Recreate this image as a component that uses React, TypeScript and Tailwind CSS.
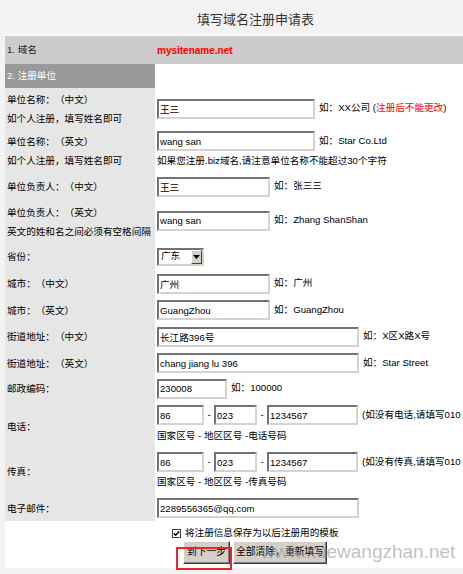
import React from "react";

function Field({ w, value }: { w: string; value: string }) {
  return (
    <input
      readOnly
      defaultValue={value}
      className={`${w} h-[20px] shrink-0 border-2 border-t-[#737373] border-l-[#737373] border-r-[#d6d3ce] border-b-[#d6d3ce] bg-white pl-[1px] text-[9.6px] text-black outline-none`}
    />
  );
}

function Label({ lines }: { lines: string[] }) {
  return (
    <div className="w-[150px] shrink-0 bg-[#e6e6e6] pl-[2px] flex flex-col justify-center leading-[19px] text-black">
      {lines.map((l) => (
        <div key={l} className="whitespace-nowrap">
          {l}
        </div>
      ))}
    </div>
  );
}

function Hint({ children }: { children: React.ReactNode }) {
  return <span className="ml-[4px] whitespace-nowrap">{children}</span>;
}

function Dash() {
  return <span className="w-[10px] shrink-0 text-center">-</span>;
}

function Btn({ w, children }: { w: string; children: React.ReactNode }) {
  return (
    <div
      className={`${w} h-[23px] shrink-0 flex items-center justify-center bg-[#d4d0c8] border border-t-white border-l-white border-r-[#404040] border-b-[#404040] shadow-[inset_-1px_-1px_0_#808080] text-[9.8px] text-black whitespace-nowrap`}
    >
      {children}
    </div>
  );
}

export default function App() {
  return (
    <div className="relative w-[463px] h-[574px] overflow-hidden bg-[#f3f3f3] font-['Liberation_Sans','Noto_Sans_CJK_SC',sans-serif] text-[9.6px] text-black [text-spacing-trim:space-all]">
      <div className="ml-[5px] w-[501px]">
        {/* title */}
        <div className="h-[36px] pt-[5px] flex items-center justify-center border-b border-[#fbfbfb] text-[13px] text-[#333]">
          填写域名注册申请表
        </div>
        {/* row 1 */}
        <div className="h-[28px] flex items-center bg-[#cccccc]">
          <div className="w-[150px] shrink-0 pl-[2px] text-[#222]">1. 域名</div>
          <div className="pl-[2px] text-[10px] font-bold text-[#ff0000]">mysitename.net</div>
        </div>
        {/* row 2 */}
        <div className="h-[24px] flex">
          <div className="w-[150px] shrink-0 bg-[#999999] pl-[2px] flex items-center text-white">2. 注册单位</div>
          <div className="flex-1 bg-white" />
        </div>

        <div className="bg-white">
          <div className="h-[41px] flex">
            <Label lines={["单位名称：（中文）", "如个人注册，填写姓名即可"]} />
            <div className="flex-1 pl-[2px] flex items-center">
              <Field w="w-[158px]" value="王三" />
              <Hint>
                如：XX公司 (<span className="text-[#ff0000]">注册后不能更改</span>)
              </Hint>
            </div>
          </div>

          <div className="h-[43px] flex">
            <Label lines={["单位名称：（英文）", "如个人注册，填写姓名即可"]} />
            <div className="flex-1 pl-[2px] flex flex-col justify-center">
              <div className="flex items-center">
                <Field w="w-[158px]" value="wang san" />
                <Hint>如：Star Co.Ltd</Hint>
              </div>
              <div className="leading-[19px] whitespace-nowrap">如果您注册.biz域名,请注意单位名称不能超过30个字符</div>
            </div>
          </div>

          <div className="h-[29px] flex">
            <Label lines={["单位负责人：（中文）"]} />
            <div className="flex-1 pl-[2px] flex items-center">
              <Field w="w-[113px]" value="王三" />
              <Hint>如：张三三</Hint>
            </div>
          </div>

          <div className="h-[42px] flex">
            <Label lines={["单位负责人：（英文）", "英文的姓和名之间必须有空格间隔"]} />
            <div className="flex-1 pl-[2px] flex items-center pb-[3px]">
              <Field w="w-[113px]" value="wang san" />
              <Hint>如：Zhang ShanShan</Hint>
            </div>
          </div>

          <div className="h-[27px] flex">
            <Label lines={["省份："]} />
            <div className="flex-1 pl-[2px] flex items-center">
              <div className="w-[47px] h-[18px] border-2 border-t-[#737373] border-l-[#737373] border-r-[#d6d3ce] border-b-[#d6d3ce] bg-white flex items-center">
                <span className="flex-1 pl-[2px] whitespace-nowrap">广东</span>
                <span className="w-[11px] h-[14px] bg-[#d4d0c8] border border-t-white border-l-white border-r-[#404040] border-b-[#404040] flex items-center justify-center">
                  <svg width="7" height="4" viewBox="0 0 7 4">
                    <path d="M0 0H7L3.5 4Z" fill="#000" />
                  </svg>
                </span>
              </div>
            </div>
          </div>

          <div className="h-[27px] flex">
            <Label lines={["城市：（中文）"]} />
            <div className="flex-1 pl-[2px] flex items-center">
              <Field w="w-[113px]" value="广州" />
              <Hint>如：广州</Hint>
            </div>
          </div>

          <div className="h-[26px] flex">
            <Label lines={["城市：（英文）"]} />
            <div className="flex-1 pl-[2px] flex items-center">
              <Field w="w-[113px]" value="GuangZhou" />
              <Hint>如：GuangZhou</Hint>
            </div>
          </div>

          <div className="h-[27px] flex">
            <Label lines={["街道地址：（中文）"]} />
            <div className="flex-1 pl-[2px] flex items-center">
              <Field w="w-[202px]" value="长江路396号" />
              <Hint>如：X区X路X号</Hint>
            </div>
          </div>

          <div className="h-[26px] flex">
            <Label lines={["街道地址：（英文）"]} />
            <div className="flex-1 pl-[2px] flex items-center">
              <Field w="w-[202px]" value="chang jiang lu 396" />
              <Hint>如：Star Street</Hint>
            </div>
          </div>

          <div className="h-[25px] flex">
            <Label lines={["邮政编码："]} />
            <div className="flex-1 pl-[2px] flex items-center">
              <Field w="w-[70px]" value="230008" />
              <Hint>如：100000</Hint>
            </div>
          </div>

          <div className="h-[49px] flex">
            <div className="w-[150px] shrink-0 bg-[#e6e6e6] pl-[2px] pt-[3px] flex items-center">电话：</div>
            <div className="flex-1 pl-[2px] pt-[4px] flex flex-col">
              <div className="flex items-center">
                <Field w="w-[47px]" value="86" />
                <Dash />
                <Field w="w-[43px]" value="023" />
                <Dash />
                <Field w="w-[91px]" value="1234567" />
                <Hint>(如没有电话,请填写010</Hint>
              </div>
              <div className="mt-[2px] leading-[18px] whitespace-nowrap">国家区号 - 地区区号 -电话号码</div>
            </div>
          </div>

          <div className="h-[45px] flex">
            <div className="w-[150px] shrink-0 bg-[#e6e6e6] pl-[2px] flex items-center">传真：</div>
            <div className="flex-1 pl-[2px] pt-[2px] flex flex-col">
              <div className="flex items-center">
                <Field w="w-[47px]" value="86" />
                <Dash />
                <Field w="w-[43px]" value="023" />
                <Dash />
                <Field w="w-[91px]" value="1234567" />
                <Hint>(如没有传真,请填写010</Hint>
              </div>
              <div className="mt-[1px] leading-[18px] whitespace-nowrap">国家区号 - 地区区号 -传真号码</div>
            </div>
          </div>

          <div className="h-[26px] flex">
            <Label lines={["电子邮件："]} />
            <div className="flex-1 pl-[2px] flex items-center">
              <Field w="w-[202px]" value="2289556365@qq.com" />
            </div>
          </div>

          {/* bottom */}
          <div className="h-[47px] pt-[5px] flex flex-col">
            <div className="h-[15px] pl-[167px] flex items-center">
              <span className="w-[9px] h-[9px] shrink-0 bg-white border border-[#404040] flex items-center justify-center">
                <svg width="7" height="7" viewBox="0 0 7 7">
                  <path d="M0.8 3.3L2.6 5.2L6.2 1.4" fill="none" stroke="#000" strokeWidth="1.4" />
                </svg>
              </span>
              <span className="ml-[4px] whitespace-nowrap">将注册信息保存为以后注册用的模板</span>
            </div>
            <div className="pl-[178px] flex gap-[3px]">
              <Btn w="w-[47px]">到下一步</Btn>
              <Btn w="w-[94px]">全部清除，重新填写</Btn>
            </div>
          </div>
        </div>
      </div>

      {/* watermark */}
      <div className="absolute left-[261px] top-[542px] text-[19px] leading-[19px] font-['Liberation_Sans',sans-serif] text-[rgba(140,140,140,0.55)] whitespace-nowrap pointer-events-none">
        www.xuewangzhan.net
      </div>
      {/* red highlight */}
      <div className="absolute left-[176px] top-[547px] w-[56px] h-[23px] border-2 border-[#e8262b] pointer-events-none" />
    </div>
  );
}
